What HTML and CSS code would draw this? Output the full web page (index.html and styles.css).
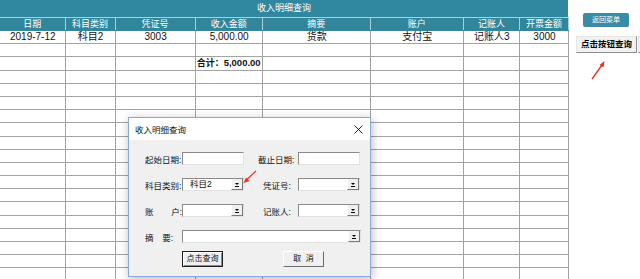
FILE: index.html
```html
<!DOCTYPE html>
<html lang="zh-CN">
<head>
  <meta charset="UTF-8" />
  <title>收入明细查询</title>
  <link rel="stylesheet" href="styles.css">
</head>
<body>
  <div class="page">
    <div class="sheet">
      <div class="sheet-title">收入明细查询</div>
      <table class="grid">
        <colgroup>
          <col style="width:65px"><col style="width:50px"><col style="width:80px"><col style="width:67px">
          <col style="width:108px"><col style="width:93px"><col style="width:56px"><col style="width:49px">
        </colgroup>
        <thead>
          <tr>
            <th>日期</th><th>科目类别</th><th>凭证号</th><th>收入金额</th>
            <th>摘要</th><th>账户</th><th>记账人</th><th>开票金额</th>
          </tr>
        </thead>
        <tbody id="rows">
          <tr>
            <td>2019-7-12</td><td>科目2</td><td>3003</td><td>5,000.00</td>
            <td>货款</td><td>支付宝</td><td>记账人3</td><td>3000</td>
          </tr>
          <tr><td></td><td></td><td></td><td></td><td></td><td></td><td></td><td></td></tr>
          <tr>
            <td></td><td></td><td></td><td class="total">合计：<b>5,000.00</b></td>
            <td></td><td></td><td></td><td></td>
          </tr>
        </tbody>
      </table>
    </div>

    <div class="side">
      <button class="menu-btn">返回菜单</button>
      <div class="btn-row">
        <button class="query-btn">点击按钮查询</button>
        <button class="query-btn"></button>
      </div>
    </div>
  </div>

  <svg class="arrow arrow-side" width="20" height="24" viewBox="0 0 20 24">
    <line x1="3" y1="21" x2="13" y2="7" stroke="#e53228" stroke-width="1.3"/>
    <polygon points="15.5,3 10.5,7 14.5,9.5" fill="#e53228"/>
  </svg>

  <div class="dialog">
    <div class="dialog-title">
      <span>收入明细查询</span>
      <svg class="close" width="9" height="9" viewBox="0 0 9 9">
        <path d="M0.5 0.5 L8.5 8.5 M8.5 0.5 L0.5 8.5" stroke="#222" stroke-width="1"/>
      </svg>
    </div>
    <div class="dialog-body">
      <div class="form-row">
        <label class="lbl">起始日期:</label>
        <span class="textbox"></span>
        <label class="lbl2 lbl2-wide">截止日期:</label>
        <span class="textbox"></span>
      </div>
      <div class="form-row">
        <label class="lbl">科目类别:</label>
        <span class="combo"><span class="combo-value">科目2</span><span class="drop"></span></span>
        <label class="lbl2">凭证号:</label>
        <span class="combo"><span class="combo-value"></span><span class="drop"></span></span>
      </div>
      <div class="form-row">
        <label class="lbl"><span>账</span><span>户:</span></label>
        <span class="combo"><span class="combo-value"></span><span class="drop"></span></span>
        <label class="lbl2">记账人:</label>
        <span class="combo"><span class="combo-value"></span><span class="drop"></span></span>
      </div>
      <div class="form-row">
        <label class="lbl lbl-short"><span>摘</span><span>要:</span></label>
        <span class="combo combo-long"><span class="combo-value"></span><span class="drop"></span></span>
      </div>
      <div class="dialog-buttons">
        <button class="win-btn win-btn-default">点击查询</button>
        <button class="win-btn">取&nbsp;&nbsp;消</button>
      </div>
    </div>
  </div>

  <svg class="arrow arrow-dialog" width="16" height="14" viewBox="0 0 16 14">
    <line x1="13" y1="1" x2="4" y2="9.5" stroke="#e53228" stroke-width="1.2"/>
    <polygon points="0.5,13 3,7.5 6.5,11" fill="#e53228"/>
  </svg>

  <script>
    const body = document.getElementById('rows');
    for (let i = 0; i < 16; i++) {
      const tr = document.createElement('tr');
      for (let c = 0; c < 8; c++) {
        tr.appendChild(document.createElement('td'));
      }
      body.appendChild(tr);
    }
  </script>
</body>
</html>
```

FILE: styles.css
```css
html, body {
  margin: 0;
  padding: 0;
  height: 279px;
  overflow: hidden;
  background-color: #ffffff;
}
body {
  font-family: "Liberation Sans", "Noto Sans CJK SC", sans-serif;
  color: #111;
}
.page {
  display: flex;
  align-items: flex-start;
}
.sheet {
  width: 568px;
  flex: none;
}
.sheet-title {
  height: 17px;
  background-color: #2f87a0;
  color: #ffffff;
  font-size: 9px;
  line-height: 17px;
  text-align: center;
}
.grid {
  width: 569px;
  table-layout: fixed;
  border-collapse: collapse;
}
.grid th {
  height: 12px;
  padding: 0;
  background-color: #31869c;
  color: #ffffff;
  font-weight: normal;
  font-size: 9px;
  line-height: 12px;
  border: 1px solid #a9d1dd;
  border-bottom-color: #31869c;
}
.grid td {
  height: 12.2px;
  padding: 0 0 0 1px;
  font-size: 10px;
  line-height: 12px;
  text-align: center;
  border: 1px solid #a3a3a3;
  white-space: nowrap;
  overflow: visible;
}
.grid th:first-child,
.grid td:first-child {
  border-left: none;
}
.grid td.total {
  text-align: left;
  font-weight: bold;
  font-size: 9px;
}
.grid td.total b {
  font-size: 9.5px;
}
.side {
  flex: 1;
  min-width: 0;
  overflow: hidden;
  padding-top: 13px;
}
.menu-btn {
  display: block;
  margin-left: 15px;
  width: 46px;
  height: 14px;
  padding: 0;
  border: none;
  border-radius: 2px;
  background-color: #3a8ca6;
  color: #ffffff;
  font-family: inherit;
  font-size: 7px;
  line-height: 14px;
}
.btn-row {
  display: flex;
  gap: 1px;
  margin-top: 9px;
  margin-left: 8px;
}
.query-btn {
  flex: none;
  width: 61px;
  height: 17px;
  padding: 0;
  background-color: #f2f2f2;
  border: 1px solid;
  border-color: #e6e6e6 #8c8c8c #8c8c8c #e6e6e6;
  color: #000;
  font-family: inherit;
  font-weight: bold;
  font-size: 8.5px;
  line-height: 15px;
}
.arrow {
  position: absolute;
}
.arrow-side {
  left: 589px;
  top: 58px;
}
.arrow-dialog {
  left: 243px;
  top: 170px;
}
.dialog {
  position: absolute;
  left: 128px;
  top: 117px;
  width: 243px;
  height: 160px;
  box-sizing: border-box;
  border: 1px solid #86abd6;
  background-color: #f0f0f0;
  box-shadow: 1px 2px 9px rgba(0, 0, 0, 0.28);
}
.dialog-title {
  height: 22px;
  display: flex;
  align-items: center;
  justify-content: space-between;
  padding: 0 6px 0 6px;
  background-color: #ffffff;
  font-size: 8.5px;
  color: #111;
}
.close {
  margin-right: 1px;
}
.dialog-body {
  padding: 12px 0 0 16px;
  display: flex;
  flex-direction: column;
  gap: 13px;
}
.form-row {
  display: flex;
  align-items: center;
  height: 13px;
  font-size: 8.5px;
}
.lbl {
  width: 37px;
  flex: none;
  display: flex;
  justify-content: space-between;
  white-space: nowrap;
}
.lbl-short {
  width: 28px;
  margin-right: 9px;
}
.lbl2 {
  width: 54px;
  flex: none;
  box-sizing: border-box;
  padding-left: 19px;
  white-space: nowrap;
}
.lbl2-wide {
  padding-left: 14px;
}
.textbox,
.combo {
  flex: none;
  width: 62px;
  height: 13px;
  box-sizing: border-box;
  background-color: #ffffff;
  border: 1px solid;
  border-color: #8a8a8a #e2e2e2 #e2e2e2 #8a8a8a;
}
.combo {
  display: flex;
  align-items: stretch;
}
.combo-value {
  flex: 1;
  padding-left: 7px;
  line-height: 11px;
  font-size: 8.5px;
}
.drop {
  position: relative;
  width: 10px;
  flex: none;
  background-color: #f0f0f0;
  border-left: 1px solid #ffffff;
  border-right: 1px solid #7a7a7a;
  border-bottom: 1px solid #7a7a7a;
}
.drop::before {
  content: "";
  position: absolute;
  left: 3px;
  top: 4px;
  border-left: 2px solid transparent;
  border-right: 2px solid transparent;
  border-top: 2px solid #000;
}
.drop::after {
  content: "";
  position: absolute;
  left: 3px;
  top: 7px;
  width: 4px;
  height: 1px;
  background-color: #000;
}
.combo-long {
  width: 179px;
}
.dialog-buttons {
  display: flex;
  margin-top: -5px;
  padding-left: 37px;
  gap: 60px;
}
.win-btn {
  width: 41px;
  height: 16px;
  padding: 0;
  box-sizing: border-box;
  background-color: #f0f0f0;
  border: 1px solid;
  border-color: #ffffff #6b6b6b #6b6b6b #ffffff;
  font-family: inherit;
  font-size: 8px;
  line-height: 14px;
  color: #111;
}
.win-btn-default {
  border: 1px solid #1f1f1f;
  box-shadow: inset 1px 1px 0 #ffffff, inset -1px -1px 0 #8a8a8a;
}
```
